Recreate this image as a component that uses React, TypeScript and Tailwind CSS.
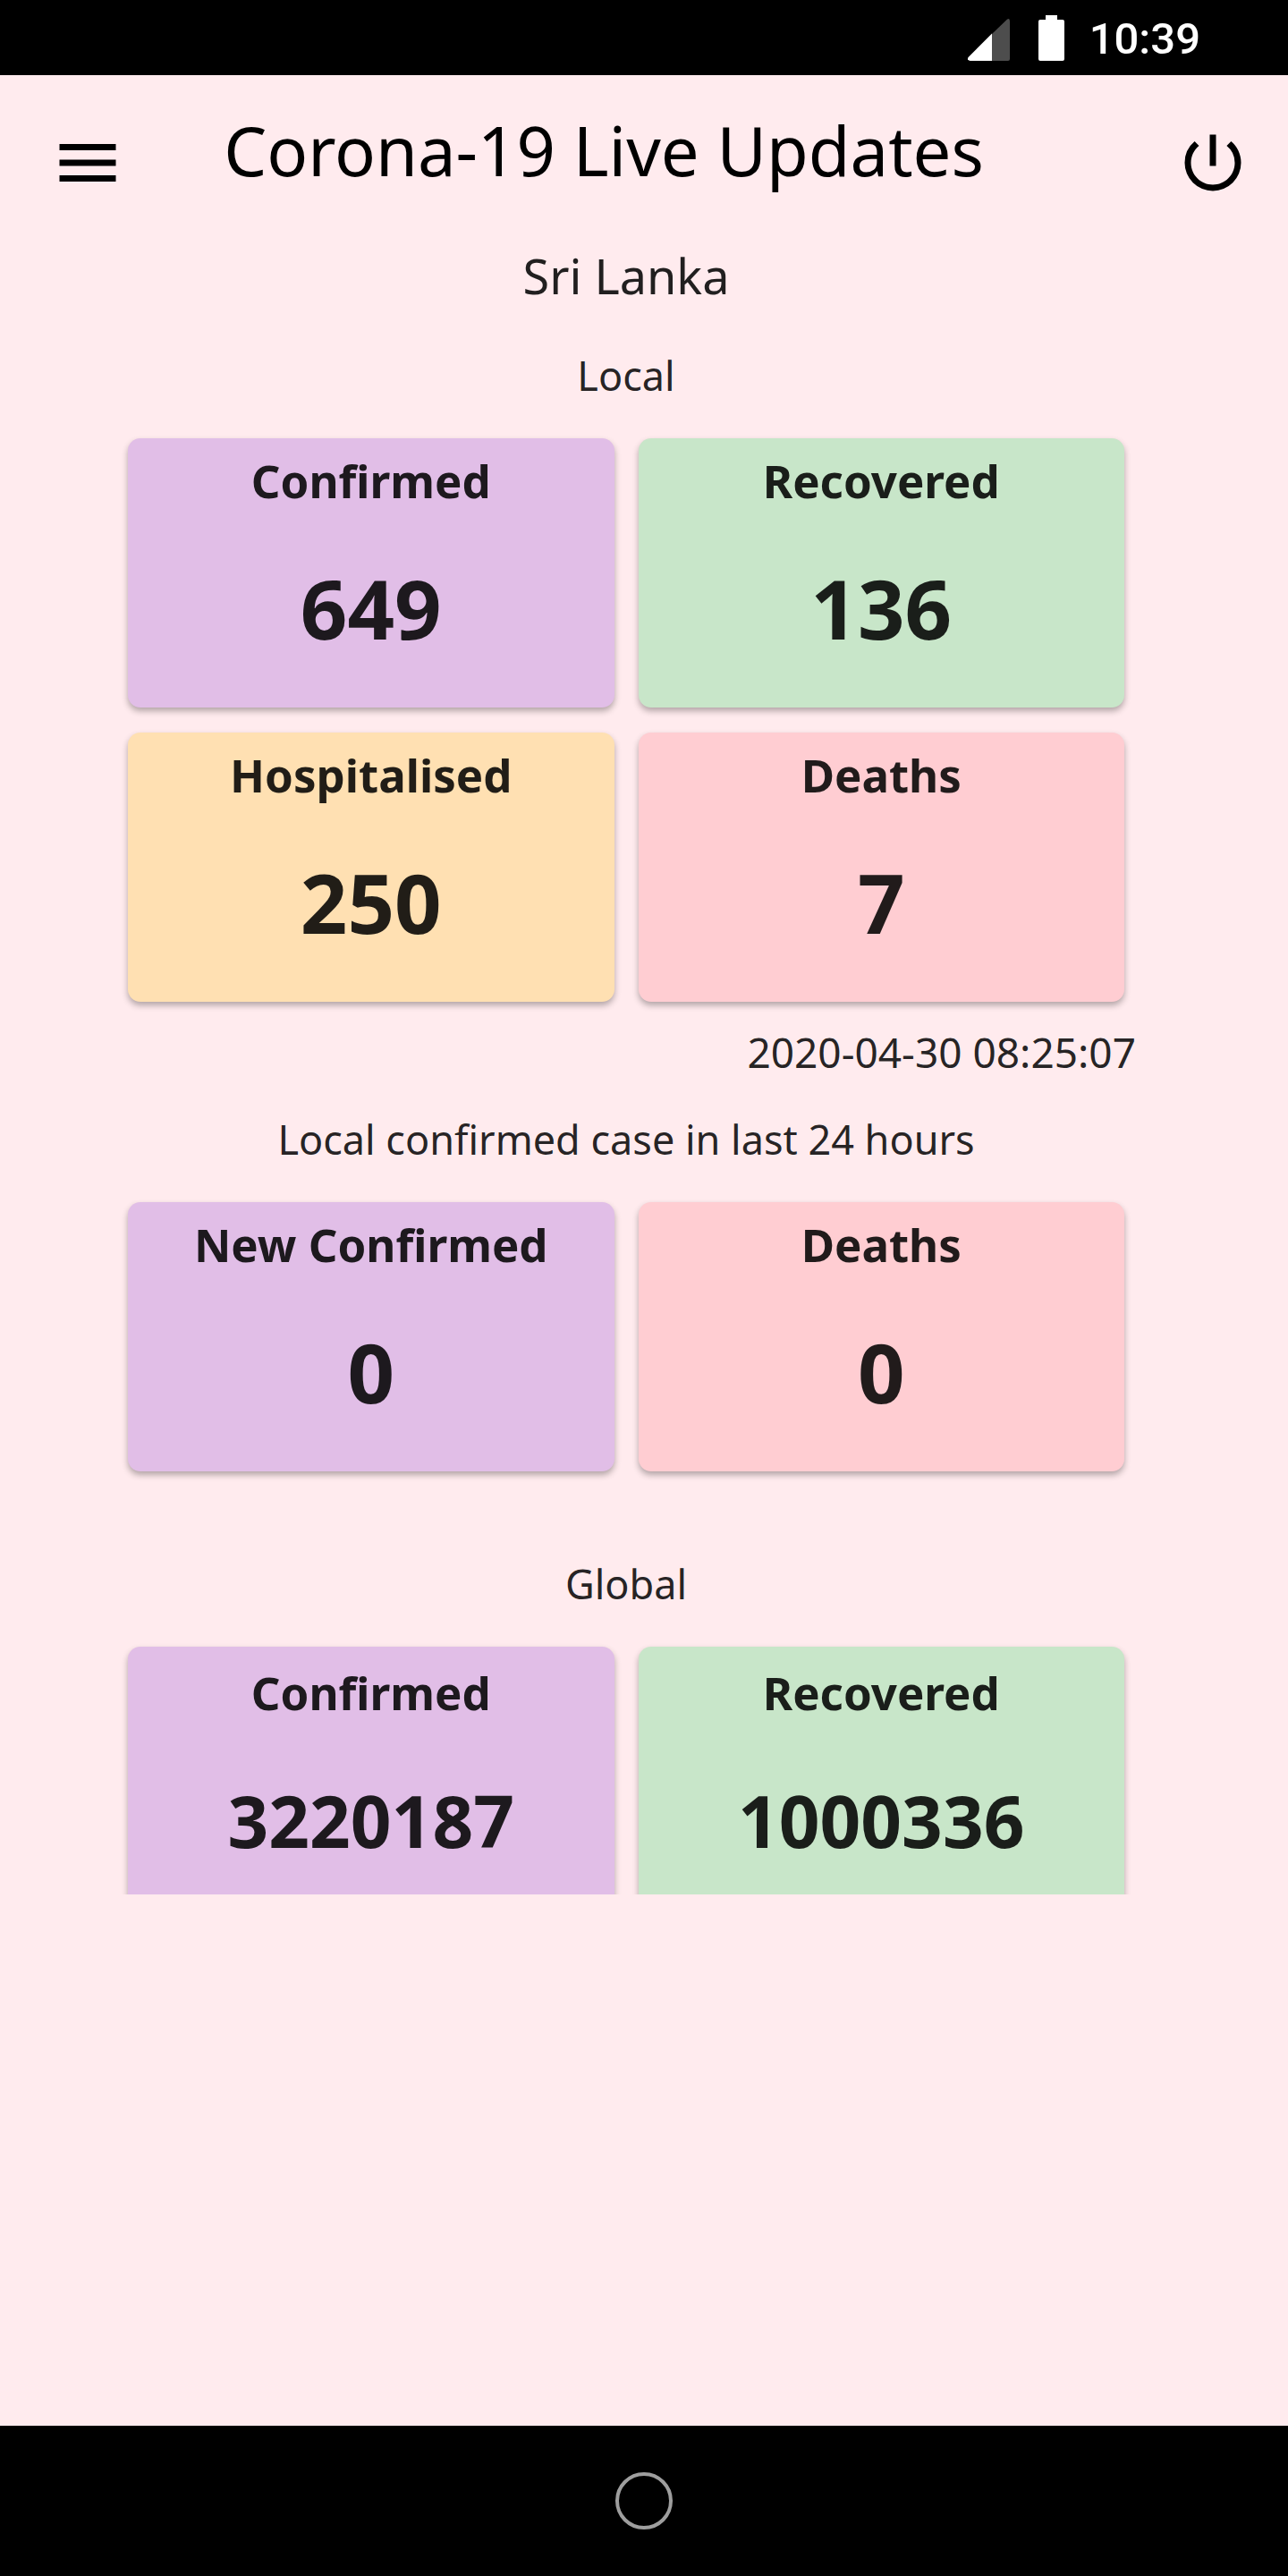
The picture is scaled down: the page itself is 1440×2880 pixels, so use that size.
import React from "react";

type Tone = "purple" | "green" | "orange" | "red";

type Stat = { label: string; value: string; tone: Tone };

const TONES: Record<Tone, string> = {
  purple: "bg-[#e1bee7]",
  green: "bg-[#c8e6c9]",
  orange: "bg-[#ffe0b2]",
  red: "bg-[#ffcdd2]",
};

const LOCAL: Stat[] = [
  { label: "Confirmed", value: "649", tone: "purple" },
  { label: "Recovered", value: "136", tone: "green" },
  { label: "Hospitalised", value: "250", tone: "orange" },
  { label: "Deaths", value: "7", tone: "red" },
];

const LAST_DAY: Stat[] = [
  { label: "New Confirmed", value: "0", tone: "purple" },
  { label: "Deaths", value: "0", tone: "red" },
];

const GLOBAL: Stat[] = [
  { label: "Confirmed", value: "3220187", tone: "purple" },
  { label: "Recovered", value: "1000336", tone: "green" },
];

function StatusBar() {
  return (
    <div className="flex h-[84px] shrink-0 items-center justify-end bg-black pr-[98px] text-white">
      <svg className="mr-8" width="47" height="51" viewBox="0 0 47 51" aria-label="Signal">
        <path d="M27 21 43.6 4.9Q47 2.500 47 7V49Q47 51 45 51H27Z" fill="#4d4d4d" />
        <path d="M27 20.600V51H2.500Q-1.500 50 .8 46.800Z" fill="#fff" />
      </svg>
      <svg className="mr-7" width="29" height="51" viewBox="0 0 29 51" aria-label="Battery">
        <path d="M8 0H21V5H27Q29 5 29 7V49Q29 51 27 51H2Q0 51 0 49V7Q0 5 2 5H8Z" fill="#fff" />
      </svg>
      <time className="pt-1 font-['Roboto',sans-serif] text-[49px] leading-[56px] font-medium">10:39</time>
    </div>
  );
}

function Header() {
  return (
    <header className="flex h-[180px] shrink-0 items-center pt-4 pr-[42px] pl-14 text-black">
      <button type="button" aria-label="Open menu" className="shrink-0">
        <svg width="84" height="84" viewBox="0 0 24 24" fill="currentColor">
          <path d="M3 18h18v-2H3v2zm0-5h18v-2H3v2zm0-7v2h18V6H3z" />
        </svg>
      </button>
      <h1 className="flex-1 pr-26 pb-7 text-center text-[76px] leading-[104px] whitespace-nowrap">
        Corona-19 Live Updates
      </h1>
      <button type="button" aria-label="Exit" className="shrink-0">
        <svg width="84" height="84" viewBox="0 0 24 24" fill="currentColor">
          <path d="M13 3h-2v10h2V3zm4.830 2.170-1.420 1.420A6.920 6.920 0 0 1 19 12c0 3.870-3.130 7-7 7s-7-3.130-7-7c0-2.190 1.010-4.140 2.580-5.420L6.170 5.170A8.932 8.932 0 0 0 3 12a9 9 0 0 0 18 0c0-2.740-1.230-5.180-3.170-6.830z" />
        </svg>
      </button>
    </header>
  );
}

function StatCard({ stat, compact }: { stat: Stat; compact?: boolean }) {
  return (
    <article
      className={`${TONES[stat.tone]} ${compact ? "pt-5 pb-[59px]" : "pt-4 pb-[63px]"} rounded-[14px] text-center font-bold shadow-[0_4px_7px_rgba(0,0,0,0.3)]`}
    >
      <h4 className="text-[51px] leading-[62px]">{stat.label}</h4>
      <p className={compact ? "mt-16 text-[80px] leading-[96px]" : "mt-16 text-[92px] leading-[96px]"}>
        {stat.value}
      </p>
    </article>
  );
}

function StatGrid({ stats, compact }: { stats: Stat[]; compact?: boolean }) {
  return (
    <div className="mx-[13px] mt-10 grid grid-cols-2 gap-x-[27px] gap-y-7">
      {stats.map((stat) => (
        <StatCard key={stat.label} stat={stat} compact={compact} />
      ))}
    </div>
  );
}

function SectionTitle({ children }: { children: React.ReactNode }) {
  return <h3 className="text-center text-[45px] leading-[60px]">{children}</h3>;
}

export default function App() {
  return (
    <div className="flex min-h-screen flex-col bg-[#ffebee] font-['Noto_Sans',sans-serif]">
      <StatusBar />
      <Header />
      <main className="h-[1854px] overflow-hidden pt-1 pr-[170px] pl-[130px] text-black/87">
        <h2 className="text-center text-[54px] leading-[80px]">Sri Lanka</h2>
        <section className="mt-[42px]">
          <SectionTitle>Local</SectionTitle>
          <StatGrid stats={LOCAL} />
          <p className="mt-[26px] text-right text-[46px] leading-[60px]">2020-04-30 08:25:07</p>
        </section>
        <section className="mt-[38px]">
          <SectionTitle>Local confirmed case in last 24 hours</SectionTitle>
          <StatGrid stats={LAST_DAY} />
        </section>
        <section className="mt-24">
          <SectionTitle>Global</SectionTitle>
          <StatGrid stats={GLOBAL} compact />
        </section>
      </main>
      <nav className="mt-auto flex h-[168px] shrink-0 items-center justify-center bg-black">
        <button type="button" aria-label="Home" className="size-16 rounded-full border-4 border-[#9e9e9e]" />
      </nav>
    </div>
  );
}
